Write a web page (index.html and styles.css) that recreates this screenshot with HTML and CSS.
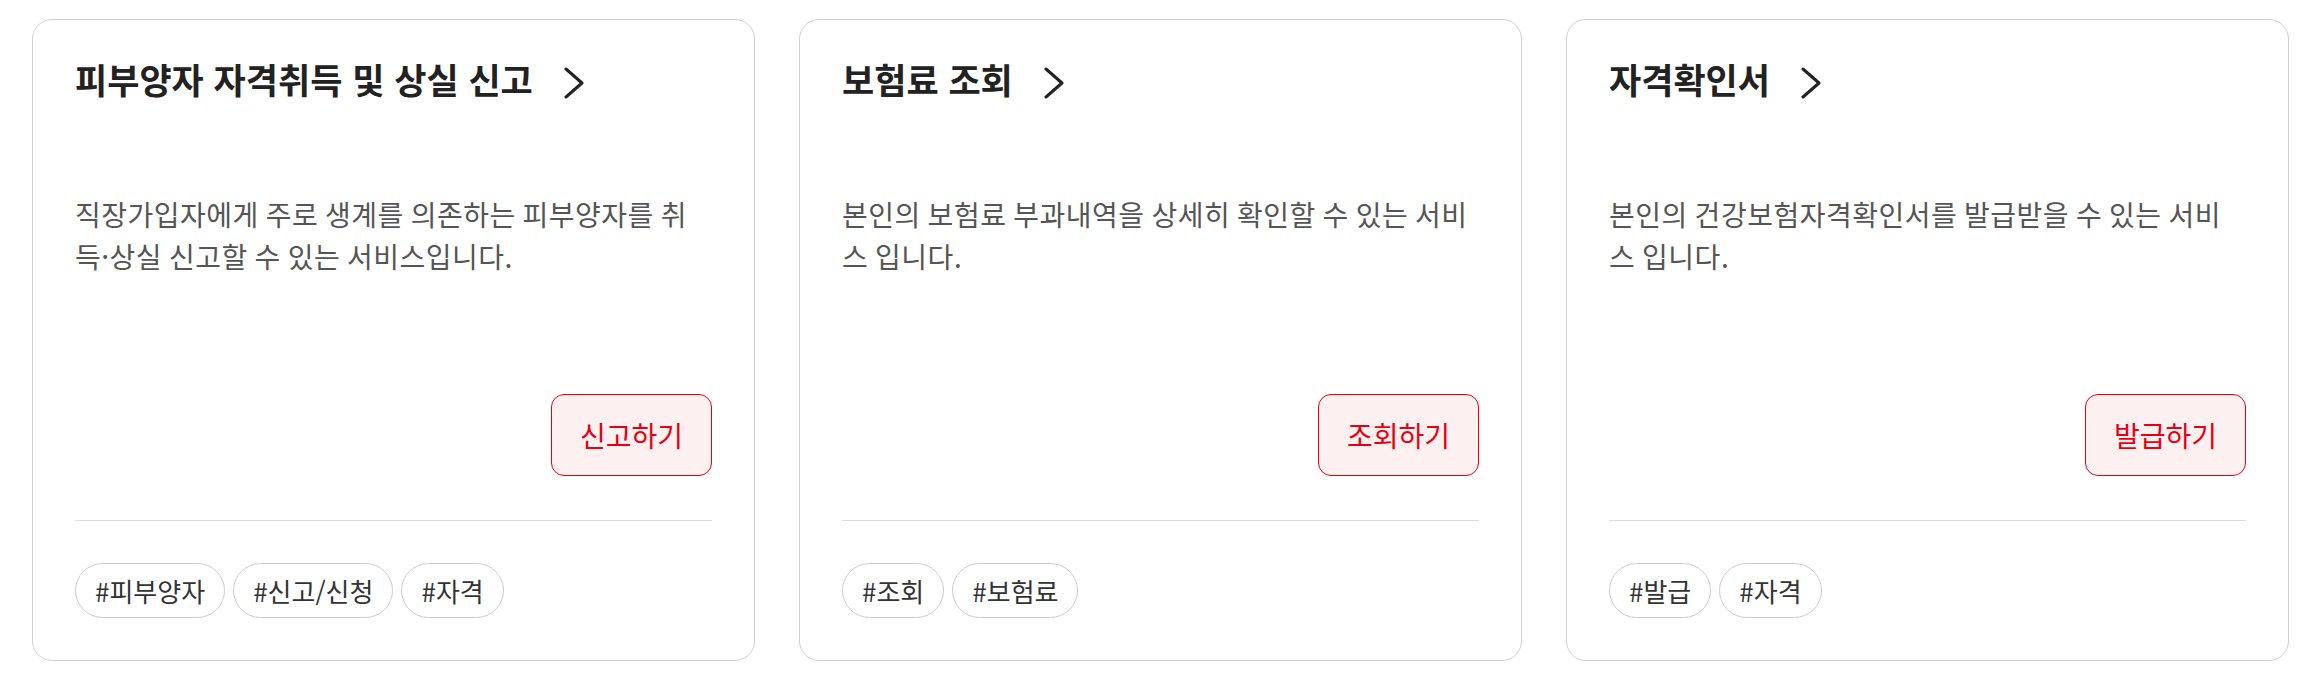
FILE: index.html
```html
<!DOCTYPE html>
<html lang="ko">
  <head>
    <meta charset="UTF-8" />
    <meta name="viewport" content="width=device-width, initial-scale=1.0" />
    <title>자격 서비스</title>
    <link rel="stylesheet" href="styles.css">
  </head>
  <body>
    <div class="service-list">
      <!-- 피부양자 -->
      <div class="service-card">
        <h2 class="service-title">
          피부양자 자격취득 및 상실 신고
          <svg class="arrow" viewBox="0 0 22 32" width="22" height="32">
            <polyline points="3,2 19,16 3,30" />
          </svg>
        </h2>
        <p class="service-desc">직장가입자에게 주로 생계를 의존하는 피부양자를 취득·상실 신고할 수 있는 서비스입니다.</p>
        <div class="service-action">
          <button class="action-btn">신고하기</button>
        </div>
        <div class="tags">
          <span class="tag">#피부양자</span>
          <span class="tag">#신고/신청</span>
          <span class="tag">#자격</span>
        </div>
      </div>

      <!-- 보험료 -->
      <div class="service-card">
        <h2 class="service-title">
          보험료 조회
          <svg class="arrow" viewBox="0 0 22 32" width="22" height="32">
            <polyline points="3,2 19,16 3,30" />
          </svg>
        </h2>
        <p class="service-desc">본인의 보험료 부과내역을 상세히 확인할 수 있는 서비스 입니다.</p>
        <div class="service-action">
          <button class="action-btn">조회하기</button>
        </div>
        <div class="tags">
          <span class="tag">#조회</span>
          <span class="tag">#보험료</span>
        </div>
      </div>

      <!-- 자격확인서 -->
      <div class="service-card">
        <h2 class="service-title">
          자격확인서
          <svg class="arrow" viewBox="0 0 22 32" width="22" height="32">
            <polyline points="3,2 19,16 3,30" />
          </svg>
        </h2>
        <p class="service-desc">본인의 건강보험자격확인서를 발급받을 수 있는 서비스 입니다.</p>
        <div class="service-action">
          <button class="action-btn">발급하기</button>
        </div>
        <div class="tags">
          <span class="tag">#발급</span>
          <span class="tag">#자격</span>
        </div>
      </div>
    </div>
  </body>
</html>
```

FILE: styles.css
```css
body {
  margin: 0;
  font-family: "Noto Sans CJK KR", "Noto Sans", sans-serif;
  background: #fff;
  color: #222;
}

.service-list {
  display: grid;
  grid-template-columns: repeat(3, 1fr);
  gap: 44px;
  padding: 19px 23px 0 32px;
}

.service-card {
  border: 1px solid #cfcfcf;
  border-radius: 20px;
  padding: 38px 42px 42px;
  background: #fff;
}

.service-title {
  display: flex;
  align-items: center;
  margin: 0;
  font-size: 35px;
  line-height: 42px;
  font-weight: 700;
  color: #222;
}

.arrow {
  margin-left: 30px;
  margin-top: 8px;
  fill: none;
  stroke: #222;
  stroke-width: 3;
  stroke-linecap: round;
  stroke-linejoin: round;
}

.service-desc {
  margin: 93px 0 0;
  font-size: 28px;
  line-height: 42px;
  letter-spacing: 0.5px;
  word-spacing: -1.5px;
  color: #555;
}

.service-action {
  display: flex;
  justify-content: flex-end;
  margin-top: 117px;
  padding-bottom: 44px;
  border-bottom: 1px solid #dcdcdc;
}

.action-btn {
  font-family: inherit;
  font-size: 28px;
  line-height: 40px;
  padding: 20px 28px;
  color: #e60012;
  background: #fdf0f0;
  border: 1px solid #e60012;
  border-radius: 13px;
  cursor: pointer;
}

.tags {
  display: flex;
  gap: 8px;
  margin-top: 42px;
}

.tag {
  font-size: 26px;
  line-height: 35px;
  padding: 9px 19px;
  color: #333;
  border: 1px solid #cccccc;
  border-radius: 30px;
}
```
